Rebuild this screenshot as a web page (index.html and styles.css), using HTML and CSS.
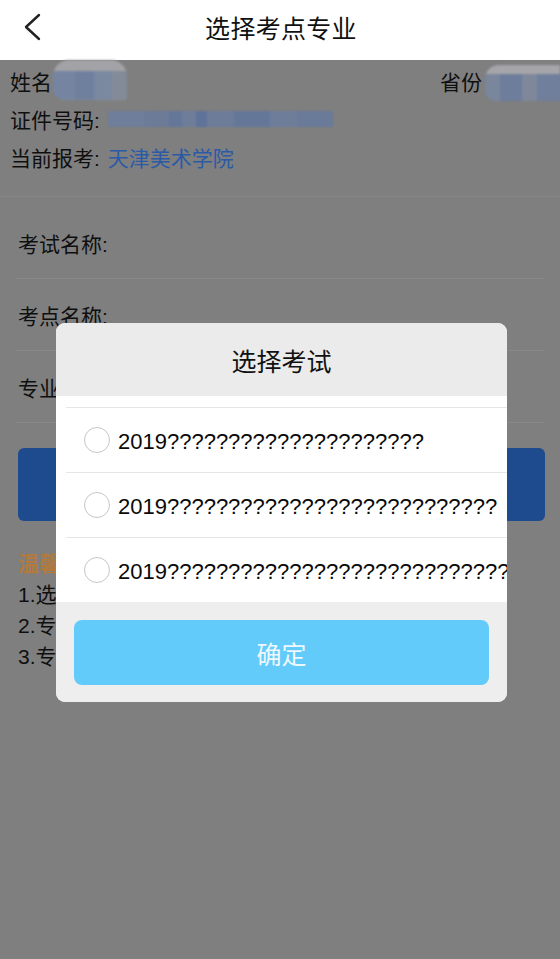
FILE: index.html
```html
<!DOCTYPE html>
<html lang="zh-CN">
<head>
<meta charset="utf-8">
<title>选择考点专业</title>
<link rel="stylesheet" href="styles.css">
</head>
<body>
<header class="topbar">
  <span class="back">
    <svg width="20" height="30" viewBox="0 0 20 30"><polyline points="16,3 3,15 16,27" fill="none" stroke="#222" stroke-width="2.4" stroke-linecap="round" stroke-linejoin="round"/></svg>
  </span>
  <h1 class="title">选择考点专业</h1>
</header>

<main class="page">
  <section class="info">
    <div class="info-row">
      <span class="lbl">姓名</span><span class="blur blur-name"></span>
      <span class="spacer"></span>
      <span class="lbl">省份</span><span class="blur blur-prov"></span>
    </div>
    <div class="info-row">
      <span class="lbl">证件号码:</span><span class="blur blur-id"></span>
    </div>
    <div class="info-row">
      <span class="lbl">当前报考:</span><span class="school">天津美术学院</span>
    </div>
  </section>

  <section class="form">
    <div class="form-row">考试名称:</div>
    <div class="form-row">考点名称:</div>
    <div class="form-row">专业名称:</div>
  </section>

  <div class="submit"></div>

  <section class="tips">
    <div class="tips-title">温馨提示</div>
    <div class="tip">1.选择考试后再选择考点</div>
    <div class="tip">2.专业请以招生简章为准</div>
    <div class="tip">3.专业选择后不可修改</div>
  </section>
</main>

<div class="modal">
  <div class="modal-title">选择考试</div>
  <ul class="modal-list">
    <li class="opt"><span class="radio"></span><span class="opt-text">2019?????????????????????</span></li>
    <li class="opt"><span class="radio"></span><span class="opt-text">2019???????????????????????????</span></li>
    <li class="opt"><span class="radio"></span><span class="opt-text">2019??????????????????????????????</span></li>
  </ul>
  <div class="modal-foot">
    <div class="ok">确定</div>
  </div>
</div>
</body>
</html>
```

FILE: styles.css
```css
html, body {
  margin: 0;
  padding: 0;
}
body {
  width: 560px;
  height: 959px;
  overflow: hidden;
  position: relative;
  background: #7f7f7f;
  font-family: "Liberation Sans", "Noto Sans CJK SC", sans-serif;
  color: #0f0f0f;
}

.topbar {
  height: 60px;
  background: #ffffff;
  display: flex;
  align-items: center;
  justify-content: center;
  position: relative;
}
.back {
  position: absolute;
  left: 23px;
  top: 12px;
  width: 20px;
  height: 30px;
  display: block;
}
.back svg { display: block; }
.title {
  margin: 0;
  font-size: 25px;
  font-weight: normal;
  color: #111;
  letter-spacing: 0.3px;
  margin-top: -7px;
  padding-left: 2px;
}

.page {
  display: flex;
  flex-direction: column;
}

.info {
  padding: 2px 0 20px 10px;
  border-bottom: 1px solid #858585;
}
.info-row {
  display: flex;
  align-items: center;
  height: 38px;
  font-size: 21px;
}
.spacer { flex: 1; }
.lbl { white-space: nowrap; }
.blur {
  display: block;
  filter: blur(1.2px);
}
.blur-name {
  width: 74px;
  height: 40px;
  margin-left: 1px;
  margin-top: -2px;
  border-radius: 16px 16px 2px 12px;
  background:
    linear-gradient(90deg, #7585a1 0 30%, #6f809f 30% 55%, #7a88a0 55% 80%, #838b99 80%) bottom / 100% 72% no-repeat,
    #a3a3a7;
}
.blur-prov {
  width: 75px;
  height: 36px;
  margin-left: 3px;
  margin-top: 4px;
  border-radius: 14px 0 0 10px;
  background:
    linear-gradient(90deg, #7a869c 0 20%, #6d7d9b 20% 50%, #7f879a 50% 70%, #6f7f9c 70%) bottom / 100% 75% no-repeat,
    #a6a6aa;
}
.blur-id {
  width: 225px;
  height: 16px;
  margin-left: 8px;
  background: linear-gradient(90deg,
    #6f7e9a 0 16%, #6b7b98 16% 27%, #647699 27% 33%, #6e7d9a 33% 39%, #5f7299 39% 44%,
    #6c7c99 44% 56%, #657799 56% 72%, #6e7d9a 72% 84%, #6a7a99 84%);
}
.school {
  color: #2b5aa6;
  margin-left: 8px;
}

.form {
  margin: 10px 15px 0 15px;
}
.form-row {
  height: 71px;
  border-bottom: 1px solid #898989;
  display: flex;
  align-items: center;
  padding-left: 3px;
  font-size: 21px;
}

.submit {
  margin: 25px 15px 0 18px;
  height: 73px;
  border-radius: 6px;
  background: #1e4a8e;
}

.tips {
  margin-top: 27px;
  padding-left: 18px;
  font-size: 21px;
}
.tips-title {
  line-height: 31px;
  color: #b27a3d;
  font-weight: bold;
}
.tip {
  line-height: 31px;
  color: #0f0f0f;
}

.modal {
  position: absolute;
  left: 56px;
  top: 323px;
  width: 451px;
  height: 379px;
  border-radius: 9px;
  background: #eeeeee;
  overflow: hidden;
  display: flex;
  flex-direction: column;
}
.modal-title {
  height: 73px;
  display: flex;
  align-items: center;
  justify-content: center;
  font-size: 25px;
  color: #111;
  background: #ebebeb;
}
.modal-list {
  list-style: none;
  margin: 0;
  padding: 11px 0 0 0;
  height: 206px;
  box-sizing: border-box;
  background: #ffffff;
  overflow: hidden;
}
.opt {
  height: 65px;
  box-sizing: border-box;
  border-top: 1px solid #e6e6e6;
  margin-left: 10px;
  padding-left: 18px;
  display: flex;
  align-items: center;
  white-space: nowrap;
  overflow: hidden;
}
.radio {
  flex: none;
  width: 24px;
  height: 24px;
  border: 1.5px solid #c6c6c6;
  border-radius: 50%;
  background: #fff;
}
.opt-text {
  margin-left: 8px;
  font-size: 22px;
  color: #0a0a0a;
  margin-top: 4px;
}
.modal-foot {
  flex: 1;
  padding: 18px 18px 0 18px;
  background: #eeeeee;
}
.ok {
  height: 65px;
  border-radius: 8px;
  background: #63cbfa;
  color: #eef8fe;
  font-size: 25px;
  display: flex;
  align-items: center;
  justify-content: center;
}
```
